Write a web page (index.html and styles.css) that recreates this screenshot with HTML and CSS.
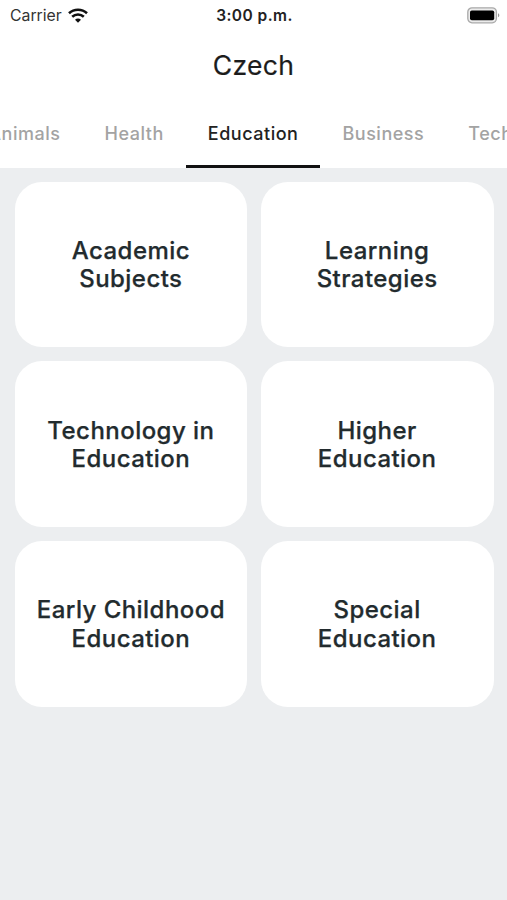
FILE: index.html
```html
<!DOCTYPE html>
<html lang="en">
<head>
<meta charset="utf-8">
<title>Czech</title>
<link rel="stylesheet" href="styles.css">
</head>
<body>
<header class="top">
  <div class="status">
    <div class="carrier"><span class="carrier-name">Carrier</span>
      <svg class="wifi" width="20" height="15" viewBox="0 0 20 15"><g fill="none" stroke="#111" stroke-width="2.6"><path d="M1 5.2C6 .6 14 .6 19 5.2"/><path d="M4.2 8.8c3.3-3 8.3-3 11.6 0"/></g><path d="M7 11.7c1.7-1.5 4.3-1.5 6 0L10 14.8z" fill="#111"/></svg>
    </div>
    <div class="time">3:00 p.m.</div>
    <svg class="battery" width="33" height="17" viewBox="0 0 33 17"><rect x=".8" y=".8" width="28.6" height="15" rx="4.2" fill="#ececec" stroke="#a9a9a9" stroke-width="1.3"/><rect x="3" y="3.4" width="24.2" height="9.8" rx="1.8" fill="#000"/><path d="M31 6.3c1.8.7 1.8 3.3 0 4z" fill="#999"/></svg>
  </div>
  <h1 class="title">Czech</h1>
  <nav class="tabs">
    <a class="tab">Animals</a>
    <a class="tab">Health</a>
    <a class="tab active">Education</a>
    <a class="tab">Business</a>
    <a class="tab">Technology</a>
  </nav>
</header>
<main class="grid">
  <div class="card">Academic<br>Subjects</div>
  <div class="card">Learning<br>Strategies</div>
  <div class="card">Technology in<br>Education</div>
  <div class="card">Higher<br>Education</div>
  <div class="card">Early Childhood<br>Education</div>
  <div class="card">Special<br>Education</div>
</main>
</body>
</html>
```
FILE: styles.css
```css
* { box-sizing: border-box; }
body {
  margin: 0;
  height: 900px;
  overflow: hidden;
  background: #eceef0;
  font-family: Inter, "Liberation Sans", sans-serif;
  color: #222b2e;
}
.top { height: 168px; background: #fff; overflow: hidden; }
.status {
  height: 29px;
  display: grid;
  grid-template-columns: 1fr auto 1fr;
  align-items: center;
  padding: 1px 8px 0 10px;
  font-size: 16px;
  color: #333;
}
.carrier { display: flex; align-items: center; gap: 6px; }
.carrier-name { font-size: 15.8px; }
.time { font-weight: 600; font-size: 15.5px; letter-spacing: 0.45px; color: #222; }
.battery { justify-self: end; margin-right: -1px; }
.title {
  margin: 0;
  height: 71px;
  line-height: 73px;
  text-align: center;
  font-size: 26.5px;
  font-weight: 400;
  letter-spacing: 0.3px;
  color: #1c1c1c;
  -webkit-text-stroke: 0.2px #1c1c1c;
}
.tabs { display: flex; height: 68px; margin-left: -33.7px; }
.tab {
  flex: none;
  padding: 0 22px;
  line-height: 68px;
  font-size: 18px;
  font-weight: 500;
  letter-spacing: 0.52px;
  color: #a3a3a3;
}
.active { color: #222; border-bottom: 3px solid #111; }
.grid {
  display: grid;
  grid-template-columns: 1fr 1fr;
  grid-auto-rows: 165.7px;
  gap: 14px 13.5px;
  padding: 13.6px 13.5px 14px 14.5px;
}
.card {
  display: flex;
  align-items: center;
  justify-content: center;
  text-align: center;
  border-radius: 27px;
  background: #fff;
  padding-top: 2px;
  font-size: 24px;
  line-height: 28.5px;
  font-weight: 500;
  letter-spacing: 0.45px;
  -webkit-text-stroke: 0.25px #222b2e;
}
```
